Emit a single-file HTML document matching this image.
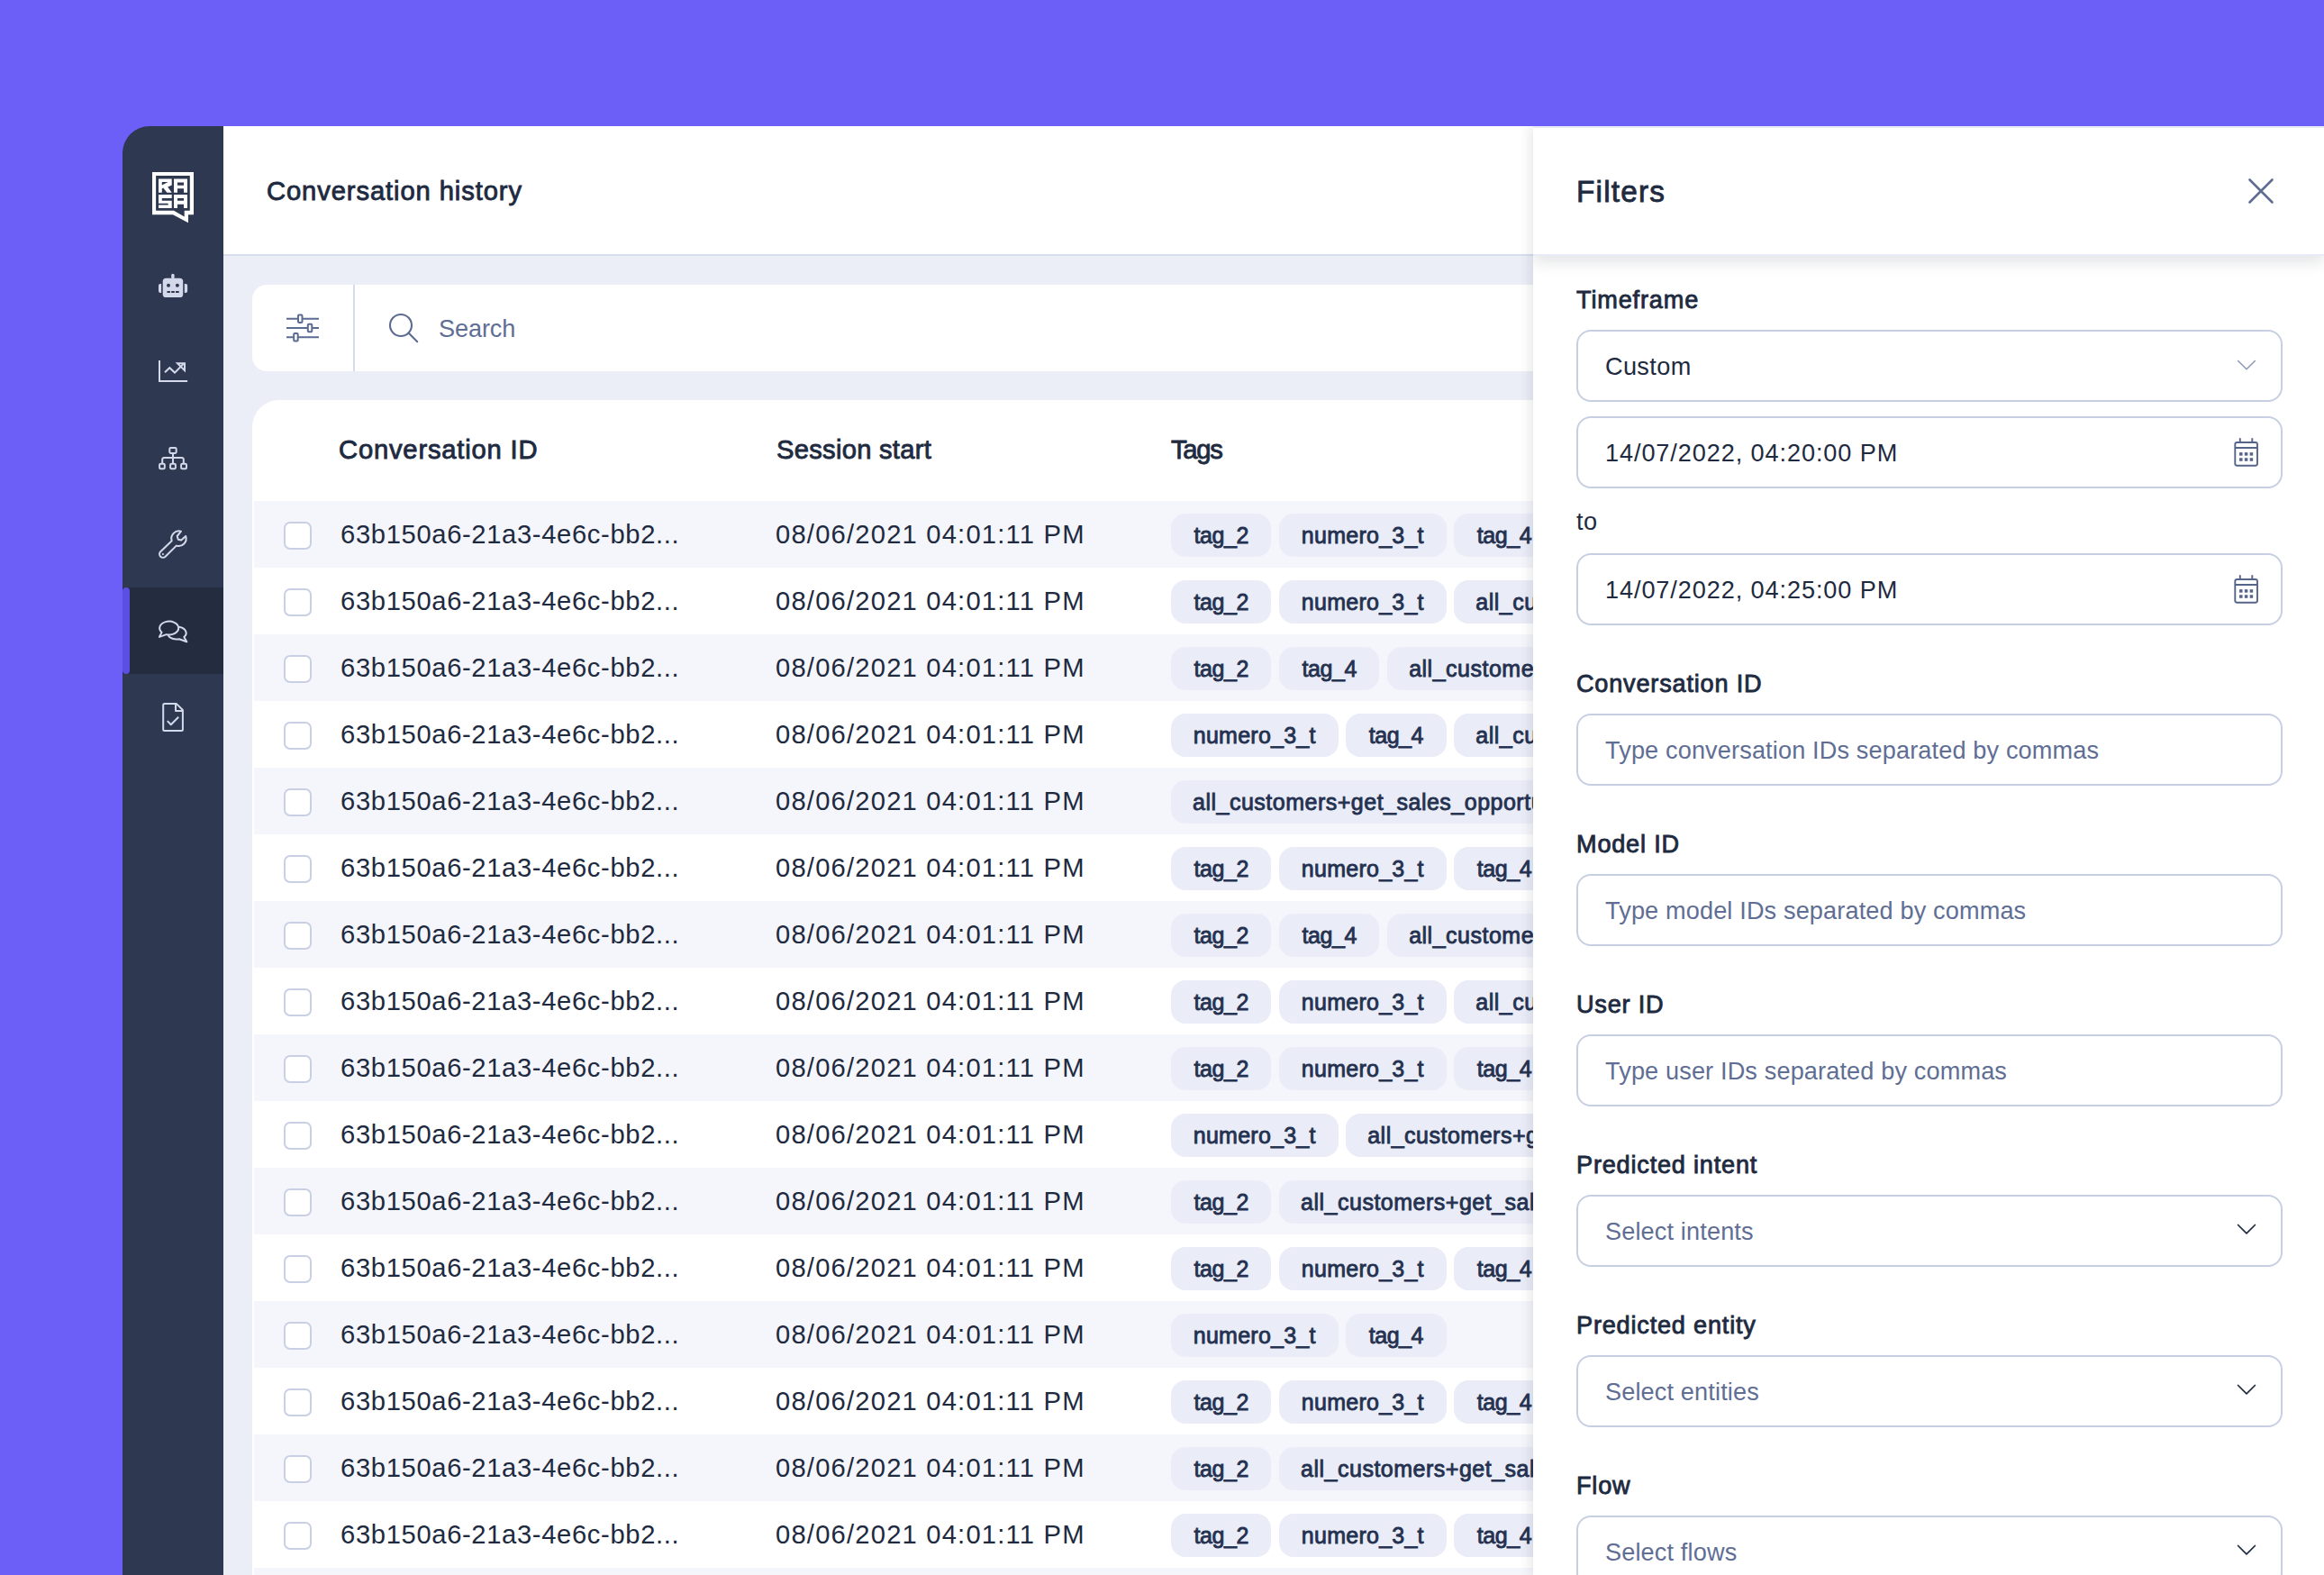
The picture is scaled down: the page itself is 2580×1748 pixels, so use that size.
<!DOCTYPE html>
<html><head><meta charset="utf-8"><style>
*{margin:0;padding:0;box-sizing:border-box}
html,body{width:2580px;height:1748px;overflow:hidden}
body{background:#6C5FF8;font-family:"Liberation Sans",sans-serif;color:#1E2A40;position:relative}
.abs{position:absolute}
.t{position:absolute;white-space:nowrap;line-height:1}
#side{left:136px;top:140px;width:112px;height:1608px;background:#2E3951;border-top-left-radius:30px}
#act{left:136px;top:652px;width:112px;height:96px;background:#242D40}
#ind{left:136px;top:652px;width:8px;height:96px;background:#5B4FE3;border-radius:4px}
#main{left:248px;top:140px;width:2332px;height:1608px;background:#EBEEF7}
#hdr{left:248px;top:140px;width:1454px;height:144px;background:#fff;border-bottom:2px solid #D9DEEC}
#search{left:280px;top:316px;width:1600px;height:96px;background:#fff;border-radius:16px}
#divider{left:391.5px;top:316px;width:2px;height:96px;background:#D5DBEA}
#table{left:280px;top:444px;width:1600px;height:1400px;background:#fff;border-radius:30px}
.row{position:absolute;left:282px;width:1500px;height:74px}
.row.g{background:#F5F6FB}
.cb{position:absolute;left:314.5px;width:31px;height:31px;border:2px solid #C9D0E4;border-radius:7px;background:#fff}
.cid{position:absolute;left:378px;font-size:29.2px;letter-spacing:0.643px;white-space:nowrap;line-height:1;color:#1E2A40}
.dt{position:absolute;left:861px;font-size:29.2px;letter-spacing:1.19px;white-space:nowrap;line-height:1;color:#1E2A40}
.chips{position:absolute;left:1300px;height:48px;display:flex;gap:8.7px;white-space:nowrap}
.chip{height:48px;border-radius:16px;background:#EAEDF7;font-size:25px;font-weight:700;color:#243150;line-height:49px;padding:0 24px;letter-spacing:0.5px;flex:none}
.chip.s{width:111.4px;text-align:center;padding:0;letter-spacing:-0.439px}
.chip.n{width:185.5px;text-align:center;padding:0;letter-spacing:0.25px}
#panel{left:1702px;top:140px;width:878px;height:1608px;background:#fff;box-shadow:-2px 0 14px rgba(20,25,40,0.12);clip-path:inset(0 0 0 -40px)}
#phdr{left:1702px;top:140px;width:878px;height:144px;background:#fff;border-top:2px solid #E9ECF7;border-bottom:2px solid #E9ECF7;box-shadow:0 7px 16px rgba(20,25,40,0.12);clip-path:inset(0 0 -40px 0)}
.lbl{position:absolute;left:1750px;font-size:27.1px;font-weight:700;letter-spacing:0.806px;white-space:nowrap;line-height:1;color:#1E2A40}
.inp{position:absolute;left:1750px;width:784px;height:80px;border:2px solid #C8CFE3;border-radius:16px;background:#fff}
.ph{position:absolute;left:1782px;font-size:27.1px;white-space:nowrap;line-height:1;color:#5F6E94;letter-spacing:0.147px}
.val{position:absolute;left:1782px;font-size:27.1px;white-space:nowrap;line-height:1;color:#1E2A40;letter-spacing:0.909px}
svg.ic{position:absolute;overflow:visible}
.sb{font-weight:400 !important;-webkit-text-stroke:0.85px currentColor}
</style></head><body>
<div id="side" class="abs"></div>
<div id="act" class="abs"></div>
<div id="ind" class="abs"></div>
<div id="main" class="abs"></div>
<div id="hdr" class="abs"></div>
<div class="t sb" style="left:296px;top:198.18px;font-size:29.2px;font-weight:700;letter-spacing:0.896px;color:#1E2A40">Conversation history</div>
<svg class="ic" style="left:0;top:0" width="2580" height="1748" viewBox="0 0 2580 1748">
<path fill="#fff" fill-rule="evenodd" d="M169,191 H215 V238.2 H209 V247.3 L192,238.2 H169 Z M173.1,195.1 V233.8 H193 L204.7,240.5 V233.8 H210.8 V195.1 Z"/>
<path fill="#fff" fill-rule="evenodd" d="M176,198.5 H190.7 V205.6 L186.2,207.6 L190.7,213.8 H185.4 L181.2,208.6 L179.8,209.2 V213.8 H176 Z M179.8,202.1 H186.6 L179.8,205.6 Z"/>
<path fill="#fff" fill-rule="evenodd" d="M193,198.5 H208 V213.8 H204 V209.2 H197 V213.8 H193 Z M197,202.4 V205.7 H204 V202.4 Z"/>
<path fill="#fff" d="M176,216 H190.7 V220.1 H179.8 V222.7 H190.7 V231 H176 V227.5 H186.7 V225.7 H176 Z"/>
<path fill="#fff" fill-rule="evenodd" d="M193,216 H208 V231 H204 V226.7 H197 V231 H193 Z M197,220.1 V222.7 H204 V220.1 Z"/>
</svg>
<svg class="ic" style="left:0;top:0" width="2580" height="1748" viewBox="0 0 2580 1748">
<g fill="#D3D9EA">
<rect x="180.7" y="308.7" width="22.5" height="21.3" rx="3.6"/>
<rect x="190.2" y="303.7" width="3.4" height="6" rx="1.7"/>
<path d="M179.1,314.9 V325 H178 A2,2 0 0 1 176,323 V317 A2,2 0 0 1 178,314.9 Z"/>
<path d="M204.8,314.9 V325 H206 A2,2 0 0 0 208.1,323 V317 A2,2 0 0 0 206,314.9 Z"/>
</g>
<g fill="#2E3951">
<circle cx="187" cy="316.8" r="2"/><circle cx="196.9" cy="316.8" r="2"/>
<rect x="185.5" y="323" width="3.4" height="2"/><rect x="190.2" y="323" width="3.6" height="2"/><rect x="195" y="323" width="3.7" height="2"/>
</g>
<g fill="none" stroke="#D3D9EA" stroke-width="2">
<path d="M177,400 V423 H208.1"/>
<path d="M183,413.2 L188.3,408.2 L194,413.6 L203.5,404"/>
<path d="M197,403.2 H205 V411.2 Z" stroke-linejoin="miter"/>
<rect x="188.3" y="497.1" width="7.4" height="5.8" rx="1.3"/>
<path d="M192,503 V514.7 M180.2,514.7 V510 Q180.2,508 182.2,508 H201.8 Q203.8,508 203.8,510 V514.7"/>
<rect x="177.1" y="514.7" width="5.7" height="5.5" rx="1.3"/>
<rect x="189.1" y="514.7" width="5.8" height="5.5" rx="1.3"/>
<rect x="201.1" y="514.7" width="5.9" height="5.5" rx="1.3"/>
<path stroke-linejoin="round" d="M190.7,600.2 A8.3,8.3 0 0 1 201,589.7 L196.7,595 L197.8,598.7 L201.2,599.5 L206.2,595 A8.3,8.3 0 0 1 195.8,605.6 L183.6,617.7 A3.8,3.8 0 0 1 178.2,612.3 Z"/>
</g>
<circle cx="180.9" cy="615" r="1.1" fill="#D3D9EA"/>
<g fill="none" stroke="#D3D9EA" stroke-width="2" stroke-linejoin="round">
<path d="M179.56,701.69 A10.5,7.4 0 1 1 184.88,704.14 L176.9,706.9 Z"/>
<path d="M198.7,695.8 A10.3,6.95 0 0 1 204.3,707 L207.3,712.3 L198.87,709.26 A10.3,6.95 0 0 1 186.5,705"/>
<path d="M183.2,781.1 H195.9 L202.9,788 V809.6 A1.5,1.5 0 0 1 201.4,811.1 H182.7 A1.5,1.5 0 0 1 181.2,809.6 V782.6 A1.5,1.5 0 0 1 182.7,781.1 Z"/>
<path d="M195,781.1 V789 H202.9"/>
<path d="M185.8,800.1 L189.8,804.2 L198.2,795.8"/>
</g>
</svg>
<div id="search" class="abs"></div>
<div id="divider" class="abs"></div>
<svg class="ic" style="left:0;top:0" width="2580" height="1748" viewBox="0 0 2580 1748">
<g stroke="#5C6B91" stroke-width="2" fill="none">
<path d="M318,353.7 H354 M318,364 H354 M318,374.2 H354"/>
</g>
<g fill="#fff" stroke="#5C6B91" stroke-width="2">
<rect x="331" y="349.5" width="4.5" height="8.5" rx="1"/>
<rect x="341.8" y="359.7" width="4.5" height="8.5" rx="1"/>
<rect x="326.2" y="370" width="4.5" height="8.5" rx="1"/>
</g>
<g stroke="#5C6B91" stroke-width="2.1" fill="none" stroke-linecap="round">
<circle cx="445" cy="361" r="12"/>
<path d="M453.6,369.6 L463.2,379.2"/>
</g>
</svg>
<div class="t" style="left:487px;top:350.76px;font-size:27.1px;color:#5F6E94;letter-spacing:-0.11px">Search</div>
<div id="table" class="abs"></div>
<div class="t sb" style="left:376px;top:485.08px;font-size:29.2px;font-weight:700;letter-spacing:0.807px">Conversation ID</div>
<div class="t sb" style="left:862px;top:485.08px;font-size:29.2px;font-weight:700;letter-spacing:0.255px">Session start</div>
<div class="t sb" style="left:1300px;top:485.08px;font-size:29.2px;font-weight:700;letter-spacing:-1.26px">Tags</div>
<div class="row g" style="top:556px"></div>
<div class="cb" style="top:578.5px"></div>
<div class="cid" style="top:579.08px">63b150a6-21a3-4e6c-bb2...</div>
<div class="dt" style="top:579.08px">08/06/2021 04:01:11 PM</div>
<div class="chips" style="top:570px"><div class="chip sb s">tag_2</div><div class="chip sb n">numero_3_t</div><div class="chip sb s">tag_4</div></div>
<div class="row" style="top:630px"></div>
<div class="cb" style="top:652.5px"></div>
<div class="cid" style="top:653.08px">63b150a6-21a3-4e6c-bb2...</div>
<div class="dt" style="top:653.08px">08/06/2021 04:01:11 PM</div>
<div class="chips" style="top:644px"><div class="chip sb s">tag_2</div><div class="chip sb n">numero_3_t</div><div class="chip sb x">all_customers+get_sales_opportunities</div></div>
<div class="row g" style="top:704px"></div>
<div class="cb" style="top:726.5px"></div>
<div class="cid" style="top:727.08px">63b150a6-21a3-4e6c-bb2...</div>
<div class="dt" style="top:727.08px">08/06/2021 04:01:11 PM</div>
<div class="chips" style="top:718px"><div class="chip sb s">tag_2</div><div class="chip sb s">tag_4</div><div class="chip sb x">all_customers+get_sales_opportunities</div></div>
<div class="row" style="top:778px"></div>
<div class="cb" style="top:800.5px"></div>
<div class="cid" style="top:801.08px">63b150a6-21a3-4e6c-bb2...</div>
<div class="dt" style="top:801.08px">08/06/2021 04:01:11 PM</div>
<div class="chips" style="top:792px"><div class="chip sb n">numero_3_t</div><div class="chip sb s">tag_4</div><div class="chip sb x">all_customers+get_sales_opportunities</div></div>
<div class="row g" style="top:852px"></div>
<div class="cb" style="top:874.5px"></div>
<div class="cid" style="top:875.08px">63b150a6-21a3-4e6c-bb2...</div>
<div class="dt" style="top:875.08px">08/06/2021 04:01:11 PM</div>
<div class="chips" style="top:866px"><div class="chip sb x">all_customers+get_sales_opportunities</div></div>
<div class="row" style="top:926px"></div>
<div class="cb" style="top:948.5px"></div>
<div class="cid" style="top:949.08px">63b150a6-21a3-4e6c-bb2...</div>
<div class="dt" style="top:949.08px">08/06/2021 04:01:11 PM</div>
<div class="chips" style="top:940px"><div class="chip sb s">tag_2</div><div class="chip sb n">numero_3_t</div><div class="chip sb s">tag_4</div></div>
<div class="row g" style="top:1000px"></div>
<div class="cb" style="top:1022.5px"></div>
<div class="cid" style="top:1023.08px">63b150a6-21a3-4e6c-bb2...</div>
<div class="dt" style="top:1023.08px">08/06/2021 04:01:11 PM</div>
<div class="chips" style="top:1014px"><div class="chip sb s">tag_2</div><div class="chip sb s">tag_4</div><div class="chip sb x">all_customers+get_sales_opportunities</div></div>
<div class="row" style="top:1074px"></div>
<div class="cb" style="top:1096.5px"></div>
<div class="cid" style="top:1097.08px">63b150a6-21a3-4e6c-bb2...</div>
<div class="dt" style="top:1097.08px">08/06/2021 04:01:11 PM</div>
<div class="chips" style="top:1088px"><div class="chip sb s">tag_2</div><div class="chip sb n">numero_3_t</div><div class="chip sb x">all_customers+get_sales_opportunities</div></div>
<div class="row g" style="top:1148px"></div>
<div class="cb" style="top:1170.5px"></div>
<div class="cid" style="top:1171.08px">63b150a6-21a3-4e6c-bb2...</div>
<div class="dt" style="top:1171.08px">08/06/2021 04:01:11 PM</div>
<div class="chips" style="top:1162px"><div class="chip sb s">tag_2</div><div class="chip sb n">numero_3_t</div><div class="chip sb s">tag_4</div></div>
<div class="row" style="top:1222px"></div>
<div class="cb" style="top:1244.5px"></div>
<div class="cid" style="top:1245.08px">63b150a6-21a3-4e6c-bb2...</div>
<div class="dt" style="top:1245.08px">08/06/2021 04:01:11 PM</div>
<div class="chips" style="top:1236px"><div class="chip sb n">numero_3_t</div><div class="chip sb x">all_customers+get_sales_opportunities</div></div>
<div class="row g" style="top:1296px"></div>
<div class="cb" style="top:1318.5px"></div>
<div class="cid" style="top:1319.08px">63b150a6-21a3-4e6c-bb2...</div>
<div class="dt" style="top:1319.08px">08/06/2021 04:01:11 PM</div>
<div class="chips" style="top:1310px"><div class="chip sb s">tag_2</div><div class="chip sb x">all_customers+get_sales_opportunities</div></div>
<div class="row" style="top:1370px"></div>
<div class="cb" style="top:1392.5px"></div>
<div class="cid" style="top:1393.08px">63b150a6-21a3-4e6c-bb2...</div>
<div class="dt" style="top:1393.08px">08/06/2021 04:01:11 PM</div>
<div class="chips" style="top:1384px"><div class="chip sb s">tag_2</div><div class="chip sb n">numero_3_t</div><div class="chip sb s">tag_4</div></div>
<div class="row g" style="top:1444px"></div>
<div class="cb" style="top:1466.5px"></div>
<div class="cid" style="top:1467.08px">63b150a6-21a3-4e6c-bb2...</div>
<div class="dt" style="top:1467.08px">08/06/2021 04:01:11 PM</div>
<div class="chips" style="top:1458px"><div class="chip sb n">numero_3_t</div><div class="chip sb s">tag_4</div></div>
<div class="row" style="top:1518px"></div>
<div class="cb" style="top:1540.5px"></div>
<div class="cid" style="top:1541.08px">63b150a6-21a3-4e6c-bb2...</div>
<div class="dt" style="top:1541.08px">08/06/2021 04:01:11 PM</div>
<div class="chips" style="top:1532px"><div class="chip sb s">tag_2</div><div class="chip sb n">numero_3_t</div><div class="chip sb s">tag_4</div></div>
<div class="row g" style="top:1592px"></div>
<div class="cb" style="top:1614.5px"></div>
<div class="cid" style="top:1615.08px">63b150a6-21a3-4e6c-bb2...</div>
<div class="dt" style="top:1615.08px">08/06/2021 04:01:11 PM</div>
<div class="chips" style="top:1606px"><div class="chip sb s">tag_2</div><div class="chip sb x">all_customers+get_sales_opportunities</div></div>
<div class="row" style="top:1666px"></div>
<div class="cb" style="top:1688.5px"></div>
<div class="cid" style="top:1689.08px">63b150a6-21a3-4e6c-bb2...</div>
<div class="dt" style="top:1689.08px">08/06/2021 04:01:11 PM</div>
<div class="chips" style="top:1680px"><div class="chip sb s">tag_2</div><div class="chip sb n">numero_3_t</div><div class="chip sb s">tag_4</div></div>
<div class="row g" style="top:1740px"></div>
<div class="cb" style="top:1762.5px"></div>
<div class="cid" style="top:1763.08px">63b150a6-21a3-4e6c-bb2...</div>
<div class="dt" style="top:1763.08px">08/06/2021 04:01:11 PM</div>
<div class="chips" style="top:1754px"><div class="chip sb s">tag_2</div><div class="chip sb n">numero_3_t</div><div class="chip sb s">tag_4</div></div>
<div id="panel" class="abs"></div>
<div id="phdr" class="abs"></div>
<div class="t sb" style="left:1750px;top:195.81px;font-size:33.3px;font-weight:700;letter-spacing:1.23px">Filters</div>
<svg class="ic" style="left:0;top:0" width="2580" height="1748" viewBox="0 0 2580 1748">
<path d="M2497.5,199.5 L2522.5,224.5 M2522.5,199.5 L2497.5,224.5" stroke="#5F6D91" stroke-width="2.6" stroke-linecap="round" fill="none"/>
</svg>
<div class="lbl sb" style="top:318.86px;letter-spacing:0.844px">Timeframe</div>
<div class="inp" style="top:366px"></div>
<div class="val" style="top:392.96px;left:1782px;letter-spacing:0.37px">Custom</div>
<div class="inp" style="top:462px"></div>
<div class="val" style="top:488.86px">14/07/2022, 04:20:00 PM</div>
<div class="t" style="left:1750px;top:565.06px;font-size:27.1px;color:#1E2A40;letter-spacing:0.5px">to</div>
<div class="inp" style="top:614px"></div>
<div class="val" style="top:640.86px">14/07/2022, 04:25:00 PM</div>
<div class="lbl sb" style="top:744.76px">Conversation ID</div>
<div class="inp" style="top:792px"></div>
<div class="ph" style="top:819.06px">Type conversation IDs separated by commas</div>
<div class="lbl sb" style="top:922.76px">Model ID</div>
<div class="inp" style="top:970px"></div>
<div class="ph" style="top:997.06px">Type model IDs separated by commas</div>
<div class="lbl sb" style="top:1100.76px">User ID</div>
<div class="inp" style="top:1148px"></div>
<div class="ph" style="top:1175.06px">Type user IDs separated by commas</div>
<div class="lbl sb" style="top:1278.76px">Predicted intent</div>
<div class="inp" style="top:1326px"></div>
<div class="ph" style="top:1353.06px">Select intents</div>
<div class="lbl sb" style="top:1456.76px">Predicted entity</div>
<div class="inp" style="top:1504px"></div>
<div class="ph" style="top:1531.06px">Select entities</div>
<div class="lbl sb" style="top:1634.76px">Flow</div>
<div class="inp" style="top:1682px"></div>
<div class="ph" style="top:1709.06px">Select flows</div>
<svg class="ic" style="left:0;top:0" width="2580" height="1748" viewBox="0 0 2580 1748"><path d="M2484.6,400.5 L2494,409.8 L2503.4,400.5" fill="none" stroke="#8C97B5" stroke-width="1.5" stroke-linecap="round" stroke-linejoin="round"/><g transform="translate(0,0)"><g fill="none" stroke="#56648A" stroke-width="1.9"><rect x="2481.3" y="491" width="24.7" height="25.7" rx="2.2"/><path d="M2481.3,497 H2506 M2486.8,486.2 V491 M2500.3,486.2 V491"/></g><g fill="#56648A"><rect x="2486.05" y="502.15" width="3.5" height="3.5"/><rect x="2486.05" y="508.25" width="3.5" height="3.5"/><rect x="2491.85" y="502.15" width="3.5" height="3.5"/><rect x="2491.85" y="508.25" width="3.5" height="3.5"/><rect x="2497.65" y="502.15" width="3.5" height="3.5"/><rect x="2497.65" y="508.25" width="3.5" height="3.5"/></g></g><g transform="translate(0,152)"><g fill="none" stroke="#56648A" stroke-width="1.9"><rect x="2481.3" y="491" width="24.7" height="25.7" rx="2.2"/><path d="M2481.3,497 H2506 M2486.8,486.2 V491 M2500.3,486.2 V491"/></g><g fill="#56648A"><rect x="2486.05" y="502.15" width="3.5" height="3.5"/><rect x="2486.05" y="508.25" width="3.5" height="3.5"/><rect x="2491.85" y="502.15" width="3.5" height="3.5"/><rect x="2491.85" y="508.25" width="3.5" height="3.5"/><rect x="2497.65" y="502.15" width="3.5" height="3.5"/><rect x="2497.65" y="508.25" width="3.5" height="3.5"/></g></g><path d="M2484.6,1359.5 L2494,1368.8 L2503.4,1359.5" fill="none" stroke="#1E2A40" stroke-width="1.7" stroke-linecap="round" stroke-linejoin="round"/><path d="M2484.6,1537.5 L2494,1546.8 L2503.4,1537.5" fill="none" stroke="#1E2A40" stroke-width="1.7" stroke-linecap="round" stroke-linejoin="round"/><path d="M2484.6,1715.5 L2494,1724.8 L2503.4,1715.5" fill="none" stroke="#1E2A40" stroke-width="1.7" stroke-linecap="round" stroke-linejoin="round"/></svg>
</body></html>
